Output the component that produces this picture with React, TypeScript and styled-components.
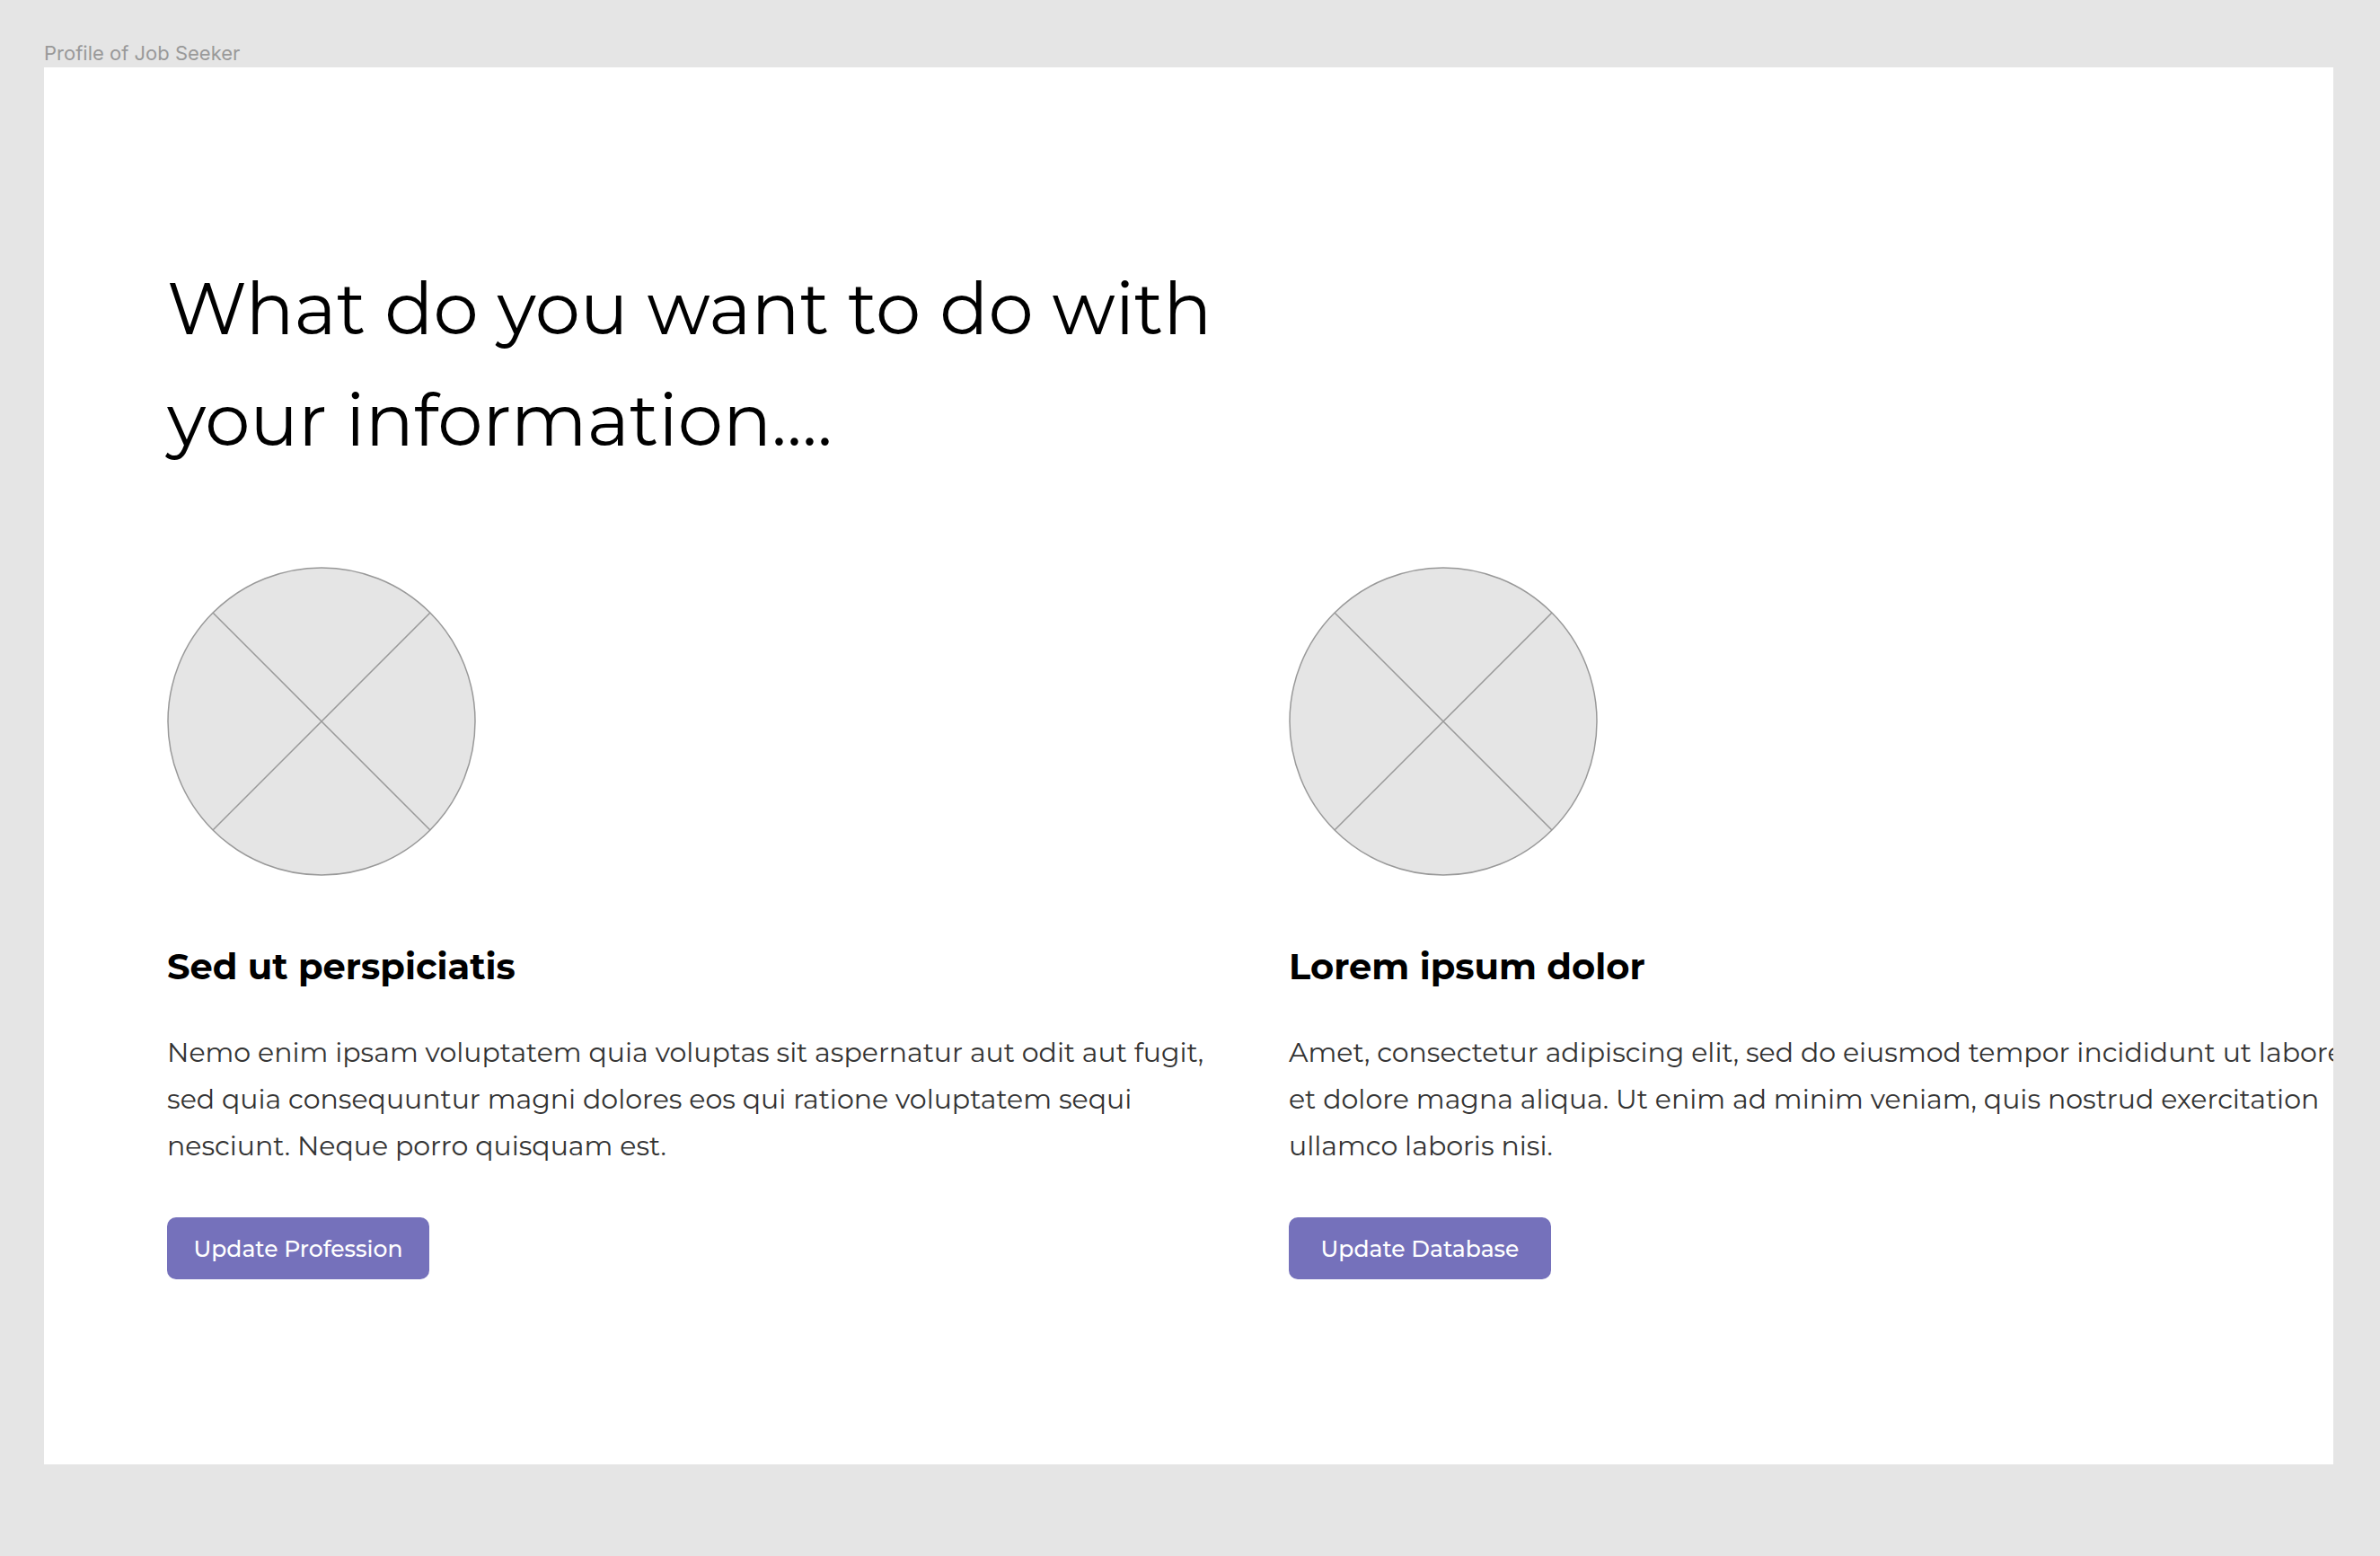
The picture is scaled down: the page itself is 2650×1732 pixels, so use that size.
import React from "react";
import styled, { createGlobalStyle } from "styled-components";

const GlobalStyle = createGlobalStyle`
  *, *::before, *::after {
    box-sizing: border-box;
  }
  body {
    margin: 0;
    background: #e5e5e5;
    font-family: Montserrat, Inter, "Open Sans", sans-serif;
    color: #000;
  }
`;

const Canvas = styled.div`
  min-height: 100vh;
  padding: 43px 52px 101px 49px;
`;

const FrameLabel = styled.p`
  margin: 0;
  font-family: Inter, sans-serif;
  font-size: 22px;
  line-height: 32px;
  color: #999;
`;

const Frame = styled.main`
  padding: 207px 0 206px 137px;
  background: #fff;
  overflow: hidden;
`;

const Title = styled.h1`
  margin: 0 0 101px;
  font-size: 80px;
  line-height: 124px;
  font-weight: 400;
`;

const Columns = styled.div`
  display: grid;
  grid-template-columns: repeat(2, minmax(0, 1fr));
  gap: 86px;
`;

const Column = styled.section`
  display: flex;
  flex-direction: column;
  align-items: flex-start;
`;

const Placeholder = styled.svg`
  display: block;
  width: 344px;
  height: 344px;
  margin-bottom: 71px;
  fill: #e5e5e5;
  stroke: #999;
`;

const Heading = styled.h2`
  margin: 0 0 40px;
  font-size: 40px;
  line-height: 60px;
  font-weight: 700;
`;

const Copy = styled.p`
  margin: 0 0 53px;
  font-size: 30px;
  line-height: 52px;
  font-weight: 400;
  color: #333;
  white-space: nowrap;
`;

const Action = styled.button`
  min-width: 292px;
  height: 69px;
  padding: 0 28px;
  border: 0;
  border-radius: 10px;
  background: #7571bb;
  color: #fff;
  font-family: inherit;
  font-size: 25px;
  line-height: 32px;
  font-weight: 500;
  cursor: pointer;
`;

interface Choice {
  heading: string;
  lines: string[];
  action: string;
}

const choices: Choice[] = [
  {
    heading: "Sed ut perspiciatis",
    lines: [
      "Nemo enim ipsam voluptatem quia voluptas sit aspernatur aut odit aut fugit,",
      "sed quia consequuntur magni dolores eos qui ratione voluptatem sequi",
      "nesciunt. Neque porro quisquam est.",
    ],
    action: "Update Profession",
  },
  {
    heading: "Lorem ipsum dolor",
    lines: [
      "Amet, consectetur adipiscing elit, sed do eiusmod tempor incididunt ut labore",
      "et dolore magna aliqua. Ut enim ad minim veniam, quis nostrud exercitation",
      "ullamco laboris nisi.",
    ],
    action: "Update Database",
  },
];

function ImagePlaceholder() {
  return (
    <Placeholder viewBox="0 0 344 344" strokeWidth="1.5" aria-hidden="true">
      <circle cx="172" cy="172" r="171" />
      <path d="M51 51 293 293M293 51 51 293" />
    </Placeholder>
  );
}

export default function App() {
  return (
    <Canvas>
      <GlobalStyle />
      <FrameLabel>Profile of Job Seeker</FrameLabel>
      <Frame>
        <Title>
          What do you want to do with
          <br />
          your information....
        </Title>
        <Columns>
          {choices.map((choice) => (
            <Column key={choice.heading}>
              <ImagePlaceholder />
              <Heading>{choice.heading}</Heading>
              <Copy>
                {choice.lines.map((line, index) => (
                  <React.Fragment key={line}>
                    {index > 0 && <br />}
                    {line}
                  </React.Fragment>
                ))}
              </Copy>
              <Action type="button">{choice.action}</Action>
            </Column>
          ))}
        </Columns>
      </Frame>
    </Canvas>
  );
}
